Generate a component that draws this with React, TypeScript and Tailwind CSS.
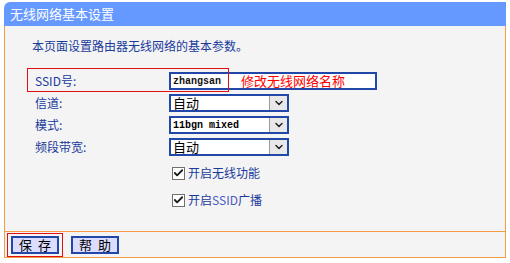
import { Check, ChevronDown } from 'lucide-react';

const font = { fontFamily: '"SimSun", "Noto Sans CJK SC", sans-serif' };

const Select = ({ value, mono }: { value: string; mono?: boolean }) => (
  <div className="flex h-[18px] w-[120px] items-stretch border-2 border-[#2147a8] bg-white">
    <div
      className={`flex flex-1 items-center pl-[2px] text-black ${
        mono ? "font-['Liberation_Mono'] text-[10px] font-bold" : 'text-[13px]'
      }`}
    >
      {value}
    </div>
    <div className="flex w-[18px] items-center justify-center border-l border-[#9a9a9a] bg-[#e8e8e8]">
      <ChevronDown className="h-[12px] w-[12px] text-[#222]" strokeWidth={3} />
    </div>
  </div>
);

const CheckRow = ({ label }: { label: React.ReactNode }) => (
  <div className="flex h-[22px] items-center pl-[167px]">
    <div className="flex h-[13px] w-[13px] items-center justify-center border border-[#707070] bg-white">
      <Check className="h-[12px] w-[12px] text-[#1a1a1a]" strokeWidth={4} />
    </div>
    <span className="ml-[3px] text-[12px] text-[#1a3a9c]">{label}</span>
  </div>
);

const App = () => {
  const rows = [
    { label: '信道:', value: '自动' },
    { label: '模式:', value: '11bgn mixed', mono: true },
    { label: '频段带宽:', value: '自动' },
  ];

  return (
    <div className="h-[263px] w-[510px] overflow-hidden bg-white" style={font}>
      <div className="ml-[4px] mt-[2px] w-[502px]">
        {/* Title bar */}
        <div className="flex h-[24px] items-center rounded-tl-[6px] bg-[#6699ff] pl-[6px] text-[13px] text-white">
          无线网络基本设置
        </div>

        {/* Body */}
        <div className="h-[205px] border-x border-[#f39b45] bg-[#f4f4f4]">
          <div className="pl-[27px] pt-[12px] text-[12px] leading-[16px] text-[#1a3a9c]">
            本页面设置路由器无线网络的基本参数。
          </div>

          <div className="relative mt-[16px]">
            {/* red highlight around SSID */}
            <div className="pointer-events-none absolute left-[22px] top-[-2px] h-[24px] w-[202px] border border-[#e01010]" />

            <div className="flex h-[22px] items-center">
              <span className="w-[164px] pl-[30px] text-[12px] text-[#1a3a9c]">SSID号:</span>
              <div className="flex h-[18px] w-[208px] items-center border-2 border-[#2147a8] bg-white pl-[2px]">
                <span className="w-[68px] font-['Liberation_Mono'] text-[10px] font-bold text-[#111]">zhangsan</span>
                <span className="text-[13px] text-[#ff0000]">修改无线网络名称</span>
              </div>
            </div>

            {rows.map((r) => (
              <div key={r.label} className="flex h-[22px] items-center">
                <span className="w-[164px] pl-[30px] text-[12px] text-[#1a3a9c]">{r.label}</span>
                <Select value={r.value} mono={r.mono} />
              </div>
            ))}
          </div>

          <div className="mt-[4px]">
            <CheckRow label="开启无线功能" />
            <div className="mt-[5px]">
              <CheckRow label={<>开启<span className="text-[#4a5ac8]">SSID</span>广播</>} />
            </div>
          </div>
        </div>

        {/* Footer */}
        <div className="relative flex h-[27px] items-center gap-[12px] border border-[#f39b45] bg-[#f4f4f4] pl-[6px]">
          <div className="pointer-events-none absolute left-[2px] top-[1px] h-[24px] w-[56px] border border-[#e01010]" />
          <button className="flex h-[18px] w-[48px] items-center justify-center border-2 border-[#2147a8] bg-[#dcdcff] text-[13px] tracking-[6px] text-black indent-[6px]">
            保存
          </button>
          <button className="flex h-[18px] w-[48px] items-center justify-center border-2 border-[#2147a8] bg-[#dcdcff] text-[13px] tracking-[6px] text-black indent-[6px]">
            帮助
          </button>
        </div>
      </div>
    </div>
  );
};

export default App;
